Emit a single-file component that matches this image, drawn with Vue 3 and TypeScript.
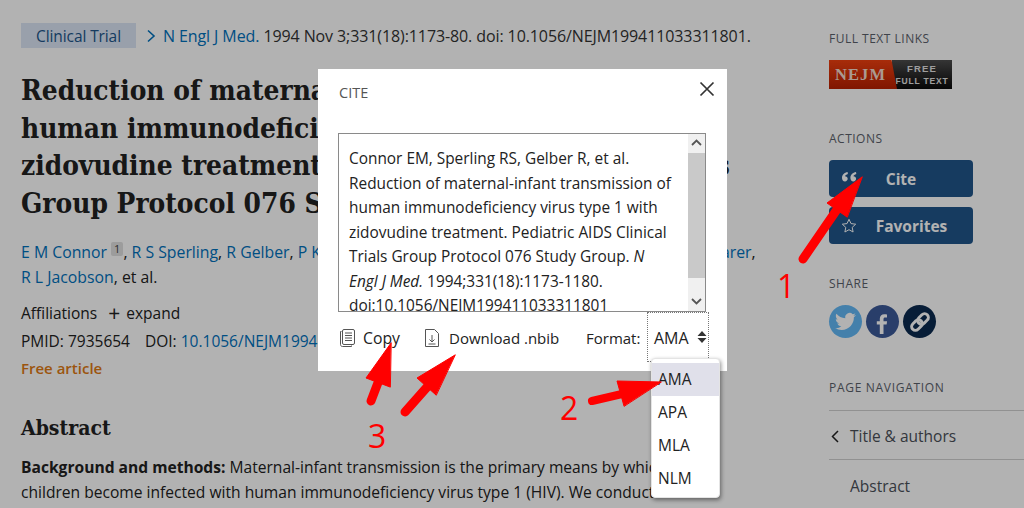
<script setup lang="ts">
const citation = [
  'Connor EM, Sperling RS, Gelber R, et al.',
  'Reduction of maternal-infant transmission of',
  'human immunodeficiency virus type 1 with',
  'zidovudine treatment. Pediatric AIDS Clinical',
]
const formats = ['AMA', 'APA', 'MLA', 'NLM']
</script>

<template>
  <div class="page">
    <main class="main">
      <div class="crumbs">
        <span class="chip">Clinical Trial</span>
        <svg class="chev" width="10" height="14" viewBox="0 0 10 14"><path d="M2 1.500 8 7l-6 5.500" fill="none" stroke="#0071bc" stroke-width="1.600" /></svg>
        <span><a class="link">N Engl J Med.</a> <span class="cit">1994 Nov 3;331(18):1173-80. doi: 10.1056/NEJM199411033311801.</span></span>
      </div>
      <h1 class="title">Reduction of maternal-infant transmission of<br />human immunodeficiency virus type 1 with<br />zidovudine treatment. <span class="tight">Pediatric AIDS Clinical Trials</span><br />Group Protocol 076 Study Group</h1>
      <div class="authors">
        <a class="link">E M Connor</a> <sup class="sup">1</sup>, <a class="link">R S Sperling</a>, <a class="link">R Gelber</a>, <a class="link">P Kiselev</a>, <span class="wide"><a class="link">G Scott</a>, <a class="link">M J O'Sullivan</a>, <a class="link">R VanDyke</a>, <a class="link">M Bey</a>,</span> <a class="link">W Shearer</a>,<br />
        <a class="link">R L Jacobson</a>, et al.
      </div>
      <div class="meta aff"><span>Affiliations</span><span class="plus">+</span><span>expand</span></div>
      <div class="meta ids"><span>PMID: 7935654</span><span>DOI: <a class="link">10.1056/NEJM199411033311801</a></span></div>
      <div class="free">Free article</div>
      <h2 class="abs-h">Abstract</h2>
      <p class="abs"><b>Background and methods:</b> Maternal-infant transmission is the primary means by which<br />children become infected with human immunodeficiency virus type 1 (HIV). We conducted</p>
    </main>

    <aside class="side">
      <h3 class="side-h first">FULL TEXT LINKS</h3>
      <div class="logo">
        <span class="logo-l">NEJM</span>
        <span class="logo-r"><span class="lr-a">FREE</span><span>FULL TEXT</span></span>
      </div>
      <h3 class="side-h actions">ACTIONS</h3>
      <button class="btn">
        <svg class="btn-ic" width="16" height="12" viewBox="0 0 16 12"><path d="M6.600 1C3.400 1.700 1 3.600 1 7c0 2 1.200 3.400 3 3.400 1.500 0 2.700-1.100 2.700-2.600S5.500 5.200 4 5.200c.3-1 1.300-1.800 2.900-2.300zM15 1c-3.200.7-5.600 2.600-5.600 6 0 2 1.200 3.400 3 3.400 1.500 0 2.700-1.100 2.700-2.600s-1.200-2.600-2.700-2.600c.3-1 1.300-1.800 2.900-2.300z" fill="#fff" /></svg>
        <span>Cite</span>
      </button>
      <button class="btn fav">
        <svg class="btn-ic" width="16" height="15" viewBox="0 0 16 15"><path d="m8 1.300 2 4.300 4.700.6-3.500 3.200.9 4.600L8 11.700 3.900 14l.9-4.600L1.300 6.200 6 5.600z" fill="none" stroke="#fff" stroke-width="1" /></svg>
        <span>Favorites</span>
      </button>
      <h3 class="side-h share">SHARE</h3>
      <div class="shares">
        <span class="round tw"><svg width="21" height="21" viewBox="0 0 24 24"><path fill="#fff" d="M23.950 4.570a10 10 0 01-2.820.77 4.960 4.960 0 002.160-2.720c-.95.55-2 .96-3.120 1.190a4.920 4.920 0 00-8.380 4.480C7.690 8.090 4.070 6.130 1.640 3.160a4.820 4.820 0 00-.67 2.480c0 1.710.87 3.210 2.190 4.100a4.900 4.900 0 01-2.230-.62v.06a4.920 4.920 0 003.950 4.830 5 5 0 01-2.210.08 4.940 4.940 0 004.600 3.420A9.870 9.870 0 010 19.540a14 14 0 007.560 2.210c9.050 0 14-7.500 14-13.980 0-.21 0-.42-.02-.63a9.940 9.940 0 002.460-2.550z" /></svg></span>
        <span class="round fb"><svg width="33" height="33" viewBox="0 0 33 33"><path fill="#fff" d="M21 9.500c-.9-.2-1.800-.3-2.700-.3-2.800 0-4.500 1.700-4.500 4.700v2.300h-3v3.400h3V29h3.700v-9.400h3.100l.5-3.400h-3.600v-2c0-1.100.5-1.600 1.600-1.600H21z" /></svg></span>
        <span class="round ln"><svg width="26" height="26" viewBox="0 0 24 24"><g fill="none" stroke="#fff" stroke-width="2.700" transform="rotate(-45 12 12)"><rect x="2.500" y="8.500" width="11" height="7" rx="3.500" /><rect x="10.500" y="8.500" width="11" height="7" rx="3.500" /></g></svg></span>
      </div>
      <h3 class="side-h nav">PAGE NAVIGATION</h3>
      <div class="nav-row">
        <svg class="nav-ch" width="8" height="13" viewBox="0 0 8 13"><path d="M7 1 1.500 6.500 7 12" fill="none" stroke="#222" stroke-width="1.500" /></svg>
        <span>Title &amp; authors</span>
      </div>
      <div class="nav-row second"><span>Abstract</span></div>
    </aside>

    <div class="scrim"></div>

    <section class="modal">
      <header class="m-head">
        <span class="m-title">CITE</span>
        <svg class="close" width="16" height="16" viewBox="0 0 16 16"><path d="m1.500 1.500 13 13m0-13-13 13" stroke="#333" stroke-width="1.700" /></svg>
      </header>
      <div class="box">
        <div class="box-text">
          <div v-for="line in citation" :key="line">{{ line }}</div>
          <div>Trials Group Protocol 076 Study Group. <i>N</i></div>
          <div><i>Engl J Med.</i> 1994;331(18):1173-1180.</div>
          <div>doi:10.1056/NEJM199411033311801</div>
        </div>
        <div class="sb">
          <svg width="17" height="19" viewBox="0 0 17 19"><path d="m4 11 4.500-4.500L13 11" fill="none" stroke="#555" stroke-width="1.800" /></svg>
          <div class="sb-thumb"></div>
          <svg width="17" height="19" viewBox="0 0 17 19"><path d="m4 7 4.500 4.500L13 7" fill="none" stroke="#555" stroke-width="1.800" /></svg>
        </div>
      </div>
      <div class="tools">
        <span class="tool copy">
          <svg width="17" height="20" viewBox="0 0 17 20"><g fill="none" stroke="#555" stroke-width="1"><path d="M2.500 3.500h-1v13c0 1 .7 2 2 2h9v-1" /><rect x="3.500" y="1.500" width="12" height="15" rx="1.500" /><path d="M6 5h7M6 7.500h7M6 10h7M6 12.500h7" /></g></svg>
          <span>Copy</span>
        </span>
        <span class="tool dl">
          <svg width="16" height="20" viewBox="0 0 16 20"><g fill="none" stroke="#555" stroke-width="1"><path d="M1.500 1.500h9l4 4v13h-13z" /><path d="M8 7v7m-2.500-2.500L8 14l2.500-2.500M4.500 16h7" /></g></svg>
          <span>Download .nbib</span>
        </span>
        <span class="fmt-label">Format:</span>
        <span class="select">AMA
          <svg width="10" height="14" viewBox="0 0 10 14"><path d="M5 1 9.500 6h-9zM5 13 .5 8h9z" fill="#333" /></svg>
        </span>
      </div>
    </section>

    <ul class="menu">
      <li v-for="(f, i) in formats" :key="f" :class="{ on: i === 0 }">{{ f }}</li>
    </ul>

    <svg class="marks" width="1024" height="508" viewBox="0 0 1024 508">
      <g fill="#f00" stroke="#f00" stroke-linecap="round">
        <path d="M803 259 838 208" stroke-width="9" fill="none" />
        <path d="M862 177 827 203 847 217z" stroke-width="1" />
        <path d="M592 401 622 394" stroke-width="8" fill="none" />
        <path d="M661 382 617 381 624 406z" stroke-width="1" />
        <path d="M371 401 379 380" stroke-width="9" fill="none" />
        <path d="M391 343 366 378 390 387z" stroke-width="1" />
        <path d="M405 412 428 386" stroke-width="9" fill="none" />
        <path d="M455 355 417 378 436 395z" stroke-width="1" />
      </g>
    </svg>
    <span class="num n1">1</span>
    <span class="num n2">2</span>
    <span class="num n3">3</span>
  </div>
</template>

<style>
html, body { margin: 0; background: #fff; }
</style>

<style scoped>
.page {
  position: relative;
  width: 1024px;
  height: 508px;
  overflow: hidden;
  display: flex;
  font-family: "Open Sans", "Noto Sans", sans-serif;
  font-size: 15px;
  color: #212121;
  background: #fff;
}
.main { width: 808px; padding: 23px 0 0 21px; box-sizing: border-box; flex: none; }
.link { color: #0071bc; }
.crumbs { display: flex; align-items: center; height: 25px; white-space: nowrap; font-size: 16px; letter-spacing: -.1px; }
.chip { width: 115px; height: 25px; font-size: 15.500px; line-height: 27px; text-align: center; background: #dce6f5; color: #20558a; }
.chev { margin: 0 7px 0 10px; }
.cit { color: #333; }
.title {
  margin: 24px 0 0;
  font: 700 27.800px/37.500px "DejaVu Serif Condensed", "DejaVu Serif", serif;
  white-space: nowrap;
}
.tight { letter-spacing: -.68px; }
.authors { margin-top: 18px; font-size: 15.800px; line-height: 25px; white-space: nowrap; }
.wide { letter-spacing: -.08px; }
.sup {
  display: inline-block;
  background: #e0e0e0;
  color: #444;
  font-size: 11px;
  line-height: 14px;
  padding: 0 3px;
  vertical-align: 5px;
  border-radius: 2px;
}
.meta { display: flex; align-items: center; height: 28px; font-size: 15.500px; white-space: nowrap; }
.aff { margin-top: 9px; }
.plus { font-size: 21px; line-height: 20px; margin: 0 6px 0 11px; }
.ids { gap: 15px; }
.free { height: 26px; line-height: 26px; font-weight: 600; color: #e07a14; }
.abs-h { margin: 32px 0 0; font: 700 21px/30px "DejaVu Serif Condensed", "DejaVu Serif", serif; }
.abs { margin: 12px 0 0; font-size: 15.600px; line-height: 24.500px; white-space: nowrap; }
.abs b { font-weight: 700; }

.side { flex: 1; padding-left: 21px; min-width: 0; }
.side-h { margin: 0; font-size: 12px; line-height: 16px; font-weight: 400; color: #5b616b; letter-spacing: .5px; }
.first { margin-top: 31px; }
.logo { display: flex; width: 123px; height: 29px; margin-top: 13px; }
.logo-l {
  width: 68px;
  box-sizing: border-box;
  padding-left: 6px;
  background: linear-gradient(#f04010, #b82000);
  clip-path: polygon(0 0, 92% 0, 100% 100%, 0 100%);
  margin-right: -5px;
  color: #f4ddd0;
  font: 700 16.500px/29px "Liberation Serif", serif;
  letter-spacing: 1.100px;
}
.logo-r {
  flex: 1;
  background: linear-gradient(#4c4c4c, #0a0a0a);
  display: flex;
  flex-direction: column;
  align-items: center;
  justify-content: center;
  color: #e2e2e2;
  font: 700 8.500px/12px "Liberation Sans", sans-serif;
  letter-spacing: .8px;
}
.lr-a { font-size: 9.500px; letter-spacing: 1.200px; }
.actions { margin-top: 42px; }
.btn {
  display: flex;
  align-items: center;
  justify-content: center;
  position: relative;
  width: 144px;
  height: 37px;
  margin-top: 13px;
  padding: 1px 0 0;
  border: 0;
  border-radius: 4px;
  background: #20558a;
  color: #fff;
  font: 700 15.500px "Open Sans", sans-serif;
}
.btn-ic { position: absolute; left: 12px; top: 11px; }
.btn + .btn { margin-top: 10px; }
.fav { padding-left: 21px; }
.share { margin-top: 32px; }
.shares { display: flex; gap: 4px; margin-top: 13px; }
.round { width: 33px; height: 33px; border-radius: 50%; display: flex; align-items: center; justify-content: center; }
.tw { background: #62b8f5; }
.fb { background: #3b5998; }
.ln { background: #0b2a4f; }
.nav { margin-top: 42px; padding-bottom: 14px; border-bottom: 1px solid #d0d0d0; letter-spacing: .7px; }
.nav-row {
  position: relative;
  height: 48px;
  line-height: 51px;
  padding-left: 21px;
  border-bottom: 1px solid #d0d0d0;
  color: #4a4f58;
  font-size: 15.500px;
}
.second { border: 0; line-height: 52px; }
.nav-ch { position: absolute; left: 2px; top: 19px; }

.scrim { position: absolute; inset: 0; background: rgba(0, 0, 0, .3); }

.modal {
  position: absolute;
  left: 318px;
  top: 69px;
  width: 409px;
  height: 302px;
  background: #fff;
  box-sizing: border-box;
  padding: 0 20px;
}
.m-head { position: relative; height: 64px; }
.m-title { position: absolute; left: 1px; top: 15.500px; font-size: 14.500px; line-height: 16px; color: #555; }
.close { position: absolute; right: -8px; top: 12px; }
.box {
  display: flex;
  height: 179px;
  width: 368px;
  box-sizing: border-box;
  border: 1px solid #8a8a8a;
  overflow: hidden;
}
.box-text {
  flex: 1;
  padding: 13px 0 0 10px;
  font-size: 15.400px;
  line-height: 24.500px;
  color: #222;
  white-space: nowrap;
  overflow: hidden;
}
.sb { width: 17px; flex: none; background: #f0f0f0; display: flex; flex-direction: column; }
.sb-thumb { flex: 1; background: #c9c9c9; margin-bottom: 14px; }
.tools { position: relative; display: flex; align-items: center; height: 52px; font-size: 15px; color: #222; white-space: nowrap; }
.tool { position: absolute; top: 15px; display: flex; align-items: center; gap: 7px; height: 22px; }
.copy { left: 1px; font-size: 15.800px; }
.dl { left: 86px; gap: 9px; }
.fmt-label { position: absolute; left: 248px; top: 15px; line-height: 22px; }
.select {
  position: absolute;
  left: 309px;
  top: 0;
  width: 62px;
  height: 50px;
  box-sizing: border-box;
  border: 1px dotted #777;
  padding: 14px 0 0 6px;
  line-height: 22px;
  font-size: 16px;
  display: flex;
  justify-content: space-between;
}
.select svg { margin: 3px 1px 0 0; }
.menu {
  position: absolute;
  left: 651px;
  top: 358px;
  width: 69px;
  height: 140px;
  margin: 0;
  padding: 4px 0 0;
  box-sizing: border-box;
  list-style: none;
  background: #fff;
  border-radius: 4px;
  border: 1px solid #e4e4e4;
  box-shadow: 1px 2px 4px rgba(0, 0, 0, .45);
  font-size: 15.500px;
  color: #222;
}
.menu li { height: 33px; line-height: 33px; padding-left: 6px; }
.menu .on { background: #e0e0ea; }
.marks { position: absolute; left: 0; top: 0; pointer-events: none; }
.num { position: absolute; color: #f00; font-size: 32px; line-height: 36px; font-family: "Open Sans", sans-serif; }
.n1 { left: 777px; top: 268px; }
.n2 { left: 560px; top: 390px; }
.n3 { left: 368px; top: 418px; }
</style>
